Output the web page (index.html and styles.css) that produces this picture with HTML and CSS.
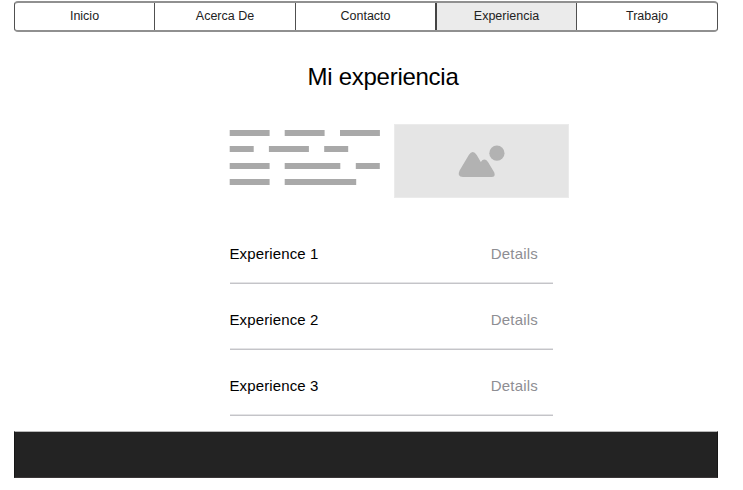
FILE: index.html
```html
<!DOCTYPE html>
<html lang="es">
<head>
<meta charset="utf-8">
<title>Mi experiencia</title>
<link rel="stylesheet" href="styles.css">
</head>
<body>
<div class="page">
  <nav class="tabs">
    <a class="tab">Inicio</a>
    <a class="tab">Acerca De</a>
    <a class="tab">Contacto</a>
    <a class="tab active">Experiencia</a>
    <a class="tab">Trabajo</a>
  </nav>
  <h1>Mi experiencia</h1>
  <main>
    <section class="intro">
      <svg class="copy" viewBox="0 0 151 74" fill="#a9a9a9" aria-hidden="true">
        <path d="M.7 6h39.9v6H.7zM55.7 6h39.9v6H55.7zM111 6h39.9v6H111zM.7 22h24v6H.7zM39.9 22h40v6h-40zM95.2 22h24v6h-24zM.7 39h39.9v6H.7zM55.7 39h55.6v6H55.7zM126.8 39h24v6h-24zM.7 55h39.9v6H.7zM55.7 55h71.5v6H55.7z"/>
      </svg>
      <div class="picture">
        <svg viewBox="0 0 175 74" fill="#b2b2b2" aria-hidden="true">
          <circle cx="102.9" cy="29.2" r="7.6"/>
          <path d="M65.6 46.5 74.8 31Q78.8 25.2 82.7 31L86.8 38Q90.3 33.2 94 38L100.3 48.5Q101.8 53 97.5 53H69Q62.5 53 65.6 46.5z"/>
        </svg>
      </div>
    </section>
    <ul class="experiences">
      <li><span>Experience 1</span><a>Details</a></li>
      <li><span>Experience 2</span><a>Details</a></li>
      <li><span>Experience 3</span><a>Details</a></li>
    </ul>
  </main>
  <footer></footer>
</div>
</body>
</html>
```
FILE: styles.css
```css
* { box-sizing: border-box; }

body {
  margin: 0;
  background: #fff;
  color: #000;
  font-family: "Liberation Sans", Arial, sans-serif;
}

.page {
  width: 704px;
  margin: 1px 0 0 14px;
}

.tabs {
  display: grid;
  grid-template-columns: 139px 141px 140px 141px 141px;
  height: 31px;
  border: solid #505050;
  border-width: 2px 1px;
  border-top-color: #909090;
  border-bottom-color: #909090;
  border-radius: 4px;
  overflow: hidden;
}

.tab {
  font-size: 12.5px;
  line-height: 26px;
  text-align: center;
  color: #222;
  border-left: 1px solid #505050;
}

.tab:first-child { border-left: 0; }

.tab.active {
  background: #ebebeb;
  border-left: 2px solid #444;
}

h1 {
  margin: 31px 0 0;
  padding-left: 34px;
  font-size: 24px;
  font-weight: 400;
  line-height: 28px;
  letter-spacing: -0.27px;
  text-align: center;
}

main { margin: 33px 0 0 215px; }

.intro {
  display: flex;
  gap: 14px;
}

.copy {
  width: 151px;
  height: 74px;
}

.picture {
  width: 175px;
  height: 74px;
  background: #e5e5e5;
  border: 1px solid #ebebeb;
}

.picture svg {
  display: block;
  width: 175px;
  height: 74px;
  margin: -1px;
}

.experiences {
  width: 323px;
  margin: 20px 0 0 1px;
  padding: 0;
  list-style: none;
}

.experiences li {
  display: flex;
  justify-content: space-between;
  height: 66px;
  padding: 27px 15px 0 0;
  border-bottom: 1px solid #c4c4c8;
  box-shadow: inset 0 -1px #e4e4e6;
  font-size: 15px;
  line-height: 18px;
  letter-spacing: 0.12px;
}

.experiences span { margin-left: -0.5px; }

.experiences a {
  color: #8e8e93;
  letter-spacing: 0.2px;
}

footer {
  height: 47px;
  margin-top: 15px;
  background: #232323;
  border: 1px solid #161616;
  border-top-color: #b8b8b8;
  border-bottom-color: #3a3637;
}
```
